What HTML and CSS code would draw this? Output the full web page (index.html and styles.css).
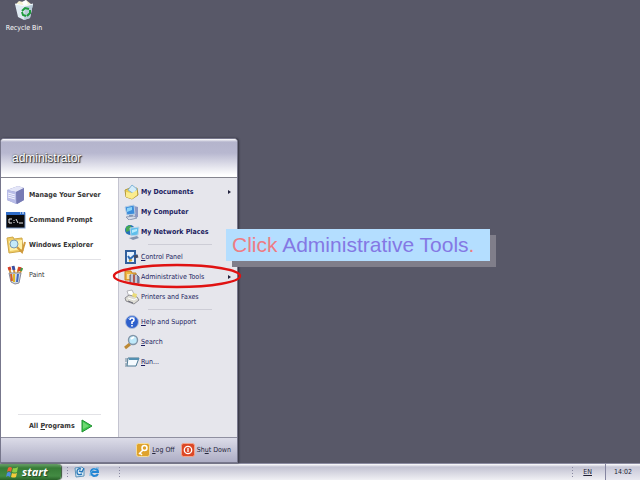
FILE: index.html
```html
<!DOCTYPE html>
<html lang="en">
<head>
	<meta charset="utf-8">
	<meta name="viewport" content="width=device-width, initial-scale=1">
	<title>Start menu - Administrative Tools</title>
	<link rel="stylesheet" href="styles.css">
</head>
<body>
	<main class="desktop">
		<a href="#" class="shortcut">
			<svg width="22" height="20" viewBox="0 0 22 20">
				<path d="M3 4 6 1l4 1 3-2 5 4v3H3z" fill="#f4f0cf"/>
				<path d="M9 2l4-2 2 4-4 2z" fill="#fff"/>
				<path d="M2 4l10 2 8-2-3 14-6 2-6-3z" fill="#dfeaf2"/>
				<path d="M12 6l8-2-3 14-6 2z" fill="#b8ccd8"/>
				<path d="M2 4l10 2 8-2" fill="none" stroke="#f4fbff"/>
				<path d="M9 11l3-3 4 1M17 10l0 3-3 3M13 16l-3-1-1-3" fill="none" stroke="#1d9b3c" stroke-width="2"/>
			</svg>
			<span>Recycle Bin</span>
		</a>

		<!-- start menu -->
		<section class="menu">
			<h1 class="menu-head">administrator</h1>
			<div class="menu-body">
				<nav class="programs">
					<a href="#" class="big">
						<svg width="20" height="20" viewBox="0 0 20 20">
							<path d="M1 5l11-4 6 2v12l-7 4-10-4z" fill="#8a8ec4"/>
							<path d="M1 5l11-4 6 2-8 4z" fill="#e4e6f8"/>
							<path d="M1 5l9 2v12l-9-4z" fill="#b9bde8"/>
							<path d="M2 8l7 2M2 10l7 2M2 12l7 2" stroke="#f4f5ff"/>
							<path d="M10 7l8-4v12l-7 4z" fill="#777bb5"/>
						</svg>
						<span>Manage Your Server</span>
					</a>
					<a href="#" class="big">
						<svg width="20" height="20" viewBox="0 0 20 20">
							<rect x="0" y="3" width="19" height="15" fill="#0a0a0c" stroke="#7897c4"/>
							<rect x="0" y="2" width="19" height="3" fill="#2f6cc8"/>
							<path d="M14 3h1M16 3h2" stroke="#fff"/>
							<path d="M6 9H3v4h3M8 10v1M8 12v1M10 9l2 4M13 13h4" fill="none" stroke="#eee"/>
						</svg>
						<span>Command Prompt</span>
					</a>
					<a href="#" class="big">
						<svg width="20" height="20" viewBox="0 0 20 20">
							<path d="M1 3l6-1 1 2 8-1 1 13-14 2z" fill="#f0ce66" stroke="#d0a848"/>
							<path d="M3 6l13-1v9l-12 2z" fill="#fff0a8"/>
							<path d="M11 12l5 5 3-10" fill="none" stroke="#d09a3c" stroke-width="2"/>
							<circle cx="8" cy="9" r="4" fill="#c4eafa" stroke="#7c98b0"/>
						</svg>
						<span>Windows Explorer</span>
					</a>
					<hr>
					<a href="#">
						<svg width="20" height="20" viewBox="0 0 20 20">
							<path d="M5 10L3 2M9 10L7 1M11 10l2-8M13 11l3-8" stroke="#d79535" stroke-width="2"/>
							<path d="M4 5L3 2M13 6l1-4" stroke="#d5402d" stroke-width="3"/>
							<path d="M8 5L7 1" stroke="#3b4fa4" stroke-width="3"/>
							<path d="M15 6l1-3" stroke="#3a9b4a" stroke-width="2"/>
							<path d="M3 8h12l-2 10-4 1-4-2z" fill="#d3dce3" stroke="#8b8b97"/>
							<path d="M5 9l1 7" stroke="#d55b29" stroke-width="2"/>
							<path d="M8 9v8" stroke="#e1b624" stroke-width="2"/>
							<path d="M12 9l-1 8" stroke="#4268bb" stroke-width="2"/>
						</svg>
						<span>Paint</span>
					</a>
					<div class="all">
						<hr>
						<a href="#">
							<span>All <u>P</u>rograms</span>
							<svg width="12" height="14" viewBox="0 0 12 14">
								<path d="M1 1l10 6-10 6z" fill="#3cc54a" stroke="#1e9130" stroke-linejoin="round"/>
								<path d="M2 3l6 4-6 3z" fill="#6fd873"/>
							</svg>
						</a>
					</div>
				</nav>

				<nav class="places">
					<a href="#" class="big">
						<svg width="16" height="16" viewBox="0 0 16 16">
							<path d="M1 6l5-2 2 1 5-1 1 7-6 4-6-2z" fill="#e9cf55" stroke="#b5993a"/>
							<path d="M4 6l4-5 5 4-3 5z" fill="#d4edfb" stroke="#82b4d6"/>
							<path d="M2 8l6 1 5-3v5l-5 4-6-2z" fill="#fbec8d"/>
						</svg>
						<span>My Documents</span>
						<i class="arrow"></i>
					</a>
					<a href="#" class="big">
						<svg width="16" height="16" viewBox="0 0 16 16">
							<path d="M10 2l4 1v10l-3 1z" fill="#8d98c2"/>
							<path d="M1 3l9-2 1 9-8 1z" fill="#3c8ddb" stroke="#b4cbe4"/>
							<path d="M3 4l5-1v3L3 8z" fill="#8cd4f8"/>
							<path d="M5 11h4v2H5z" fill="#8797b4"/>
							<path d="M2 13l8-1 3 2-8 2z" fill="#d5dbe9" stroke="#8f9bb5"/>
						</svg>
						<span>My Computer</span>
					</a>
					<a href="#" class="big">
						<svg width="16" height="16" viewBox="0 0 16 16">
							<circle cx="6" cy="6" r="5" fill="#2670b8"/>
							<path d="M2 3l4-2 2 3-3 3-3 1z" fill="#45a854"/>
							<path d="M6 4l9-1-1 8-7 1z" fill="#60bfec" stroke="#bdd4e8"/>
							<path d="M8 6l5-1v2L8 9z" fill="#b4ebff"/>
							<path d="M5 14l8-2 2 2-6 2z" fill="#8393af"/>
						</svg>
						<span>My Network Places</span>
					</a>
					<hr>
					<a href="#">
						<svg width="16" height="16" viewBox="0 0 16 16">
							<path d="M2 2h9v12H2z" fill="#e6f2ff" stroke="#315f9d" stroke-width="2"/>
							<path d="M4 7l2 3 6-5" fill="none" stroke="#2d6cb8" stroke-width="2"/>
							<path d="M10 8l4-1" stroke="#454a61" stroke-width="3"/>
							<path d="M5 12l3-1" stroke="#d6a92b" stroke-width="2"/>
						</svg>
						<span><u>C</u>ontrol Panel</span>
					</a>
					<a href="#" class="current">
						<svg width="16" height="16" viewBox="0 0 16 16">
							<path d="M1 2h6l1 2h4v7H1z" fill="#efb741" stroke="#c48023"/>
							<path d="M3 5h5v5H3z" fill="#f9e2a0"/>
							<path d="M6 6h7l2 2v6H6z" fill="#9b9cac" stroke="#696b7e"/>
							<path d="M8 5v9M12 6v8" stroke="#c4c6d6" stroke-width="2"/>
							<path d="M10 6v7" stroke="#ac5b53" stroke-width="2"/>
							<path d="M14 7v6" stroke="#576aa7"/>
						</svg>
						<span>Administrative Tools</span>
						<i class="arrow"></i>
						<svg class="ring" width="130" height="26" viewBox="0 0 130 26">
							<ellipse cx="65" cy="13" rx="63" ry="11" fill="none" stroke="#e01212" stroke-width="2.4"/>
						</svg>
					</a>
					<a href="#">
						<svg width="16" height="16" viewBox="0 0 16 16">
							<path d="M3 2l5-1 3 6-6 1z" fill="#fff" stroke="#b4b4ba"/>
							<path d="M1 9l4-3 8 2 2 3-5 4-8-3z" fill="#dddcd4" stroke="#8f8e93"/>
							<path d="M4 9l6 2 3-2" fill="none" stroke="#fff"/>
							<path d="M9 4l4 1-1 4-4-2z" fill="#eadb78"/>
							<path d="M4 12l5 2" stroke="#666775"/>
						</svg>
						<span>Printers and Faxes</span>
					</a>
					<hr>
					<a href="#">
						<svg width="16" height="16" viewBox="0 0 16 16">
							<circle cx="8" cy="8" r="6.5" fill="#2e60cc" stroke="#b0bedb"/>
							<path d="M4 5a5 5 0 0 1 7-1" fill="none" stroke="#83abef"/>
							<path d="M6 6q0-2 2-2t2 2q0 1-2 2v2M8 11v1.500" fill="none" stroke="#fff" stroke-width="1.600"/>
						</svg>
						<span><u>H</u>elp and Support</span>
					</a>
					<a href="#">
						<svg width="16" height="16" viewBox="0 0 16 16">
							<path d="M1 14l5-4" stroke="#bd8935" stroke-width="3"/>
							<circle cx="9" cy="6" r="4.500" fill="#bfe9fa" stroke="#8194a7" stroke-width="1.400"/>
							<path d="M7 5l3-2" stroke="#fff" stroke-width="2"/>
						</svg>
						<span><u>S</u>earch</span>
					</a>
					<a href="#">
						<svg width="16" height="16" viewBox="0 0 16 16">
							<path d="M4 4h11l-3 8H3z" fill="#f5fbff" stroke="#4a7893"/>
							<path d="M5 4h10v2H5z" fill="#5491b2"/>
							<path d="M1 5h3M1 7h3M1 10h2M1 12h2" stroke="#6d8a9d"/>
						</svg>
						<span><u>R</u>un...</span>
					</a>
				</nav>
			</div>
			<div class="menu-foot">
				<button type="button">
					<svg width="14" height="14" viewBox="0 0 14 14">
						<rect x=".5" y=".5" width="13" height="13" rx="2" fill="#dfa22c" stroke="#f4db9a"/>
						<circle cx="8.500" cy="5" r="2.500" fill="none" stroke="#fff" stroke-width="1.500"/>
						<path d="M7 7l-4 4M4 10l2 2" stroke="#fff" stroke-width="1.500"/>
					</svg>
					<span><u>L</u>og Off</span>
				</button>
				<button type="button">
					<svg width="14" height="14" viewBox="0 0 14 14">
						<rect x=".5" y=".5" width="13" height="13" rx="2" fill="#dc4826" stroke="#f2a48c"/>
						<circle cx="7" cy="7" r="3.700" fill="none" stroke="#fff" stroke-width="1.300"/>
						<path d="M7 5v4" stroke="#fff" stroke-width="1.300"/>
					</svg>
					<span>Sh<u>u</u>t Down</span>
				</button>
			</div>
		</section>

		<p class="callout">Click <em>Administrative Tools</em>.</p>
	</main>

	<footer class="taskbar">
		<button type="button" class="start">
			<svg width="13" height="12" viewBox="0 0 13 12">
				<path d="M2 2q2-2 4 0l-1 4q-2-2-4 0z" fill="#ed6234"/>
				<path d="M7 2q2 1 5-1l-1 5q-2 1-5 0z" fill="#8ecf46"/>
				<path d="M1 7q2-2 4 0l-1 4q-2-2-4 0z" fill="#4d8de0"/>
				<path d="M6 7q2 1 5 0l-1 4q-2 1-5 0z" fill="#f6cb3c"/>
			</svg>
			<span>start</span>
		</button>
		<i class="grip"></i>
		<a href="#" class="quick" aria-label="Outlook Express">
			<svg width="11" height="12" viewBox="0 0 11 12">
				<path d="M1 2l7-1 2 2v7l-8 1z" fill="#dcecf6" stroke="#5b91b8"/>
				<path d="M7 3q-4-1-4 3t5 2M5 5l3 1 2-4" fill="none" stroke="#2675b8" stroke-width="1.400"/>
			</svg>
		</a>
		<a href="#" class="quick" aria-label="Internet Explorer">
			<svg width="11" height="12" viewBox="0 0 11 12">
				<path d="M9 8q-1 2-4 2-3-1-3-4t4-3q3 0 3 3H3" fill="none" stroke="#2586d4" stroke-width="2"/>
				<path d="M1 10q-1-3 3-6t6-2" fill="none" stroke="#61b3e6"/>
			</svg>
		</a>
		<i class="grip"></i>
		<div class="tray">
			<i class="grip"></i>
			<span class="lang"><u>EN</u></span>
			<time class="clock">14:02</time>
		</div>
	</footer>
</body>
</html>
```
FILE: styles.css
```css
* {
	box-sizing: border-box;
	margin: 0;
	padding: 0;
}

body {
	display: flex;
	flex-direction: column;
	height: 100vh;
	overflow: hidden;
	background: #585868;
	font: 7px/10px "DejaVu Sans Condensed", "DejaVu Sans", sans-serif;
}

a {
	color: inherit;
	text-decoration: none;
}

svg {
	flex: none;
}

button {
	border: 0;
	background: none;
	color: inherit;
	font: inherit;
}

/* desktop */
.desktop {
	position: relative;
	flex: 1;
}

.shortcut {
	display: flex;
	flex-direction: column;
	align-items: center;
	gap: 3px;
	width: 48px;
	color: #fff;
}

/* start menu */
.menu {
	position: absolute;
	left: 0;
	bottom: 0;
	width: 238px;
	border: 1px solid #77778c;
	border-radius: 4px 4px 0 0;
	background: #e6e6ec;
	box-shadow: 1px 0 2px #33333f;
	color: #1c1c60;
}

.menu-head {
	height: 39px;
	padding: 12px 11px;
	border-bottom: 1px solid #85858f;
	border-radius: 3px 3px 0 0;
	background: linear-gradient(#fff 0, #b4b4cc 3px, #b8b8d0 14px, #fff 36px);
	color: #fff;
	font: 12px/14px "Liberation Sans", sans-serif;
	text-shadow: 1px 1px 1px #222, 0 0 2px #333;
}

.menu-body {
	display: flex;
	height: 259px;
}

.menu-body a {
	display: flex;
	align-items: center;
}

.menu-body hr {
	height: 1px;
	border: 0;
	background: #cdcdd6;
}

.big {
	font-weight: bold;
}

.programs {
	display: flex;
	flex: 1;
	flex-direction: column;
	padding: 4px 5px 0;
	background: #fff;
	color: #333;
}

.programs a {
	gap: 3px;
	height: 25px;
}

.programs hr {
	margin: 2px 12px;
	background: #e2e2e6;
}

.programs .all {
	margin-top: auto;
}

.programs .all hr {
	margin: 0 12px;
}

.programs .all a {
	gap: 6px;
	height: 22px;
	padding-left: 23px;
	font-weight: bold;
}

.places {
	width: 119px;
	padding: 4px 5px;
	border-left: 1px solid #c4c4d0;
	color: #1c1c60;
}

.places a {
	gap: 1px;
	height: 20px;
}

.places hr {
	margin: 2px 20px 2px 24px;
}

.arrow {
	margin: 0 1px 0 auto;
	border: 2px solid transparent;
	border-left: 3px solid #22223c;
	border-right: 0;
}

.current {
	position: relative;
}

.ring {
	position: absolute;
	left: -12px;
	top: -4px;
	z-index: 1;
}

.menu-foot {
	display: flex;
	align-items: center;
	justify-content: flex-end;
	gap: 6px;
	height: 25px;
	padding-right: 6px;
	border-top: 1px solid #8f8fa0;
	background: linear-gradient(#dcdce8, #adadc4);
	color: #26263c;
}

.menu-foot button {
	display: flex;
	align-items: center;
	gap: 2px;
}

/* instruction */
.callout {
	position: absolute;
	left: 226px;
	top: 229px;
	padding: 4px 16px 4px 6px;
	background: #b4deff;
	box-shadow: 6px 6px #807e8a;
	color: #ee7c84;
	font: 21px/24px "Liberation Sans", sans-serif;
	white-space: nowrap;
}

.callout em {
	color: #8478e4;
	font-style: normal;
}

/* taskbar */
.taskbar {
	display: flex;
	align-items: center;
	height: 17px;
	border-top: 1px solid #8c8ca2;
	background: linear-gradient(#fff, #c2c2d2 3px, #f0f0f4);
	color: #222234;
}

.start {
	display: flex;
	align-items: center;
	gap: 3px;
	width: 61px;
	height: 16px;
	margin-right: 5px;
	padding-left: 6px;
	border-radius: 0 4px 4px 0;
	background: linear-gradient(#6ba46a, #377c37 4px, #438b43 12px, #286228);
	box-shadow: 1px 0 1px #395239;
	color: #fff;
	font: italic bold 11px/14px "Open Sans", sans-serif;
	text-shadow: 1px 1px 1px #234523;
}

.grip {
	width: 4px;
	height: 12px;
	margin-right: 4px;
	background: radial-gradient(circle, #8888a0 1px, transparent 1px) 0 0 / 3px 3px;
}

.quick {
	height: 12px;
	margin-right: 4px;
}

.quick + .grip {
	margin-left: 14px;
}

.tray {
	display: flex;
	align-items: center;
	align-self: stretch;
	margin-left: auto;
}

.lang {
	margin: 0 13px 0 4px;
}

.clock {
	align-self: stretch;
	width: 35px;
	border-left: 1px solid #8585a0;
	background: linear-gradient(#fff, #c8c8d8 3px, #e8e8f0);
	line-height: 16px;
	text-align: center;
}
```
